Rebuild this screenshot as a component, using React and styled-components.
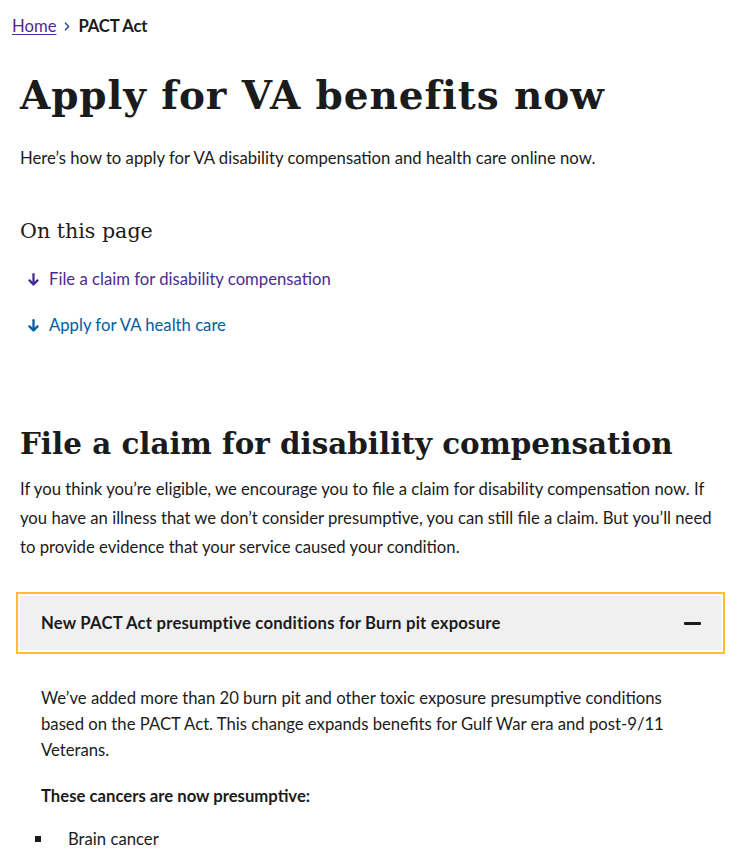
import React from "react";
import styled, { createGlobalStyle } from "styled-components";

const GlobalStyle = createGlobalStyle`
  body {
    margin: 0;
    background: #ffffff;
    color: #1b1b1b;
    font-family: "Lato", "Liberation Sans", sans-serif;
    font-size: 16.7px;
  }
  * { box-sizing: border-box; }
`;

const Page = styled.main`
  padding: 0 20px 40px 20px;
`;

const Breadcrumbs = styled.nav`
  display: flex;
  align-items: center;
  gap: 8px;
  margin: 14px 0 0 -8px;
  line-height: 24px;
`;

const CrumbLink = styled.a`
  color: #4c2c92;
  text-decoration: underline;
  text-underline-offset: 2px;
`;

const CrumbCurrent = styled.span`
  font-weight: 700;
  color: #1b1b1b;
  letter-spacing: -0.2px;
`;

const Title = styled.h1`
  font-family: "DejaVu Serif", "Liberation Serif", serif;
  font-weight: 700;
  font-size: 39px;
  letter-spacing: 0.9px;
  line-height: 48px;
  margin: 33px 0 0 0;
`;

const Intro = styled.p`
  margin: 26px 0 0 0;
  line-height: 27px;
`;

const OnPageTitle = styled.h2`
  font-family: "DejaVu Serif", "Liberation Serif", serif;
  font-weight: 400;
  font-size: 20.6px;
  line-height: 27px;
  margin: 46px 0 0 0;
`;

const JumpList = styled.ul`
  list-style: none;
  margin: 21px 0 0 0;
  padding: 0 0 0 8px;
  display: flex;
  flex-direction: column;
  gap: 18px;
`;

const JumpItem = styled.li`
  line-height: 27px;
`;

const JumpLink = styled.a`
  display: inline-flex;
  align-items: center;
  gap: 10px;
  color: ${(p) => (p.visited ? "#4c2c92" : "#005ea2")};
  text-decoration: none;
`;

const SectionTitle = styled.h2`
  font-family: "DejaVu Serif", "Liberation Serif", serif;
  font-weight: 700;
  font-size: 29.4px;
  line-height: 36px;
  margin: 86px 0 0 0;
`;

const Para = styled.p`
  margin: 13px 0 0 0;
  line-height: 29px;
`;

const Accordion = styled.section`
  margin-top: 34px;
`;

const AccordionButton = styled.button`
  width: 100%;
  display: flex;
  align-items: center;
  justify-content: space-between;
  padding: 15px 20px 15px 21px;
  border: none;
  background: #f0f0f0;
  font-family: inherit;
  font-size: 16.7px;
  font-weight: 700;
  letter-spacing: 0.2px;
  line-height: 24px;
  color: #1b1b1b;
  text-align: left;
  outline: 2px solid #ffbe2e;
  outline-offset: 2px;
  cursor: pointer;
`;

const Minus = styled.span`
  display: block;
  width: 17px;
  height: 3px;
  border-radius: 1px;
  background: #1b1b1b;
`;

const AccordionBody = styled.div`
  padding: 35px 20px 0 21px;
`;

const BodyText = styled.p`
  margin: ${(p) => p.mt || 0}px 0 0 0;
  line-height: 26px;
  font-weight: ${(p) => (p.bold ? 700 : 400)};
`;

const Bullets = styled.ul`
  list-style: none;
  margin: 17px 0 0 0;
  padding: 0;
`;

const Bullet = styled.li`
  display: flex;
  align-items: center;
  line-height: 26px;

  &::before {
    content: "";
    width: 6px;
    height: 6px;
    background: #1b1b1b;
    margin: 0 27px 0 -6px;
  }
`;

const DownArrow = () => (
  <svg width="11" height="13" viewBox="0 0 11 13" fill="none">
    <path d="M5.5 1.2v10" stroke="currentColor" strokeWidth="2.3" strokeLinecap="round" />
    <path d="M1.5 7.4l4 4 4-4" stroke="currentColor" strokeWidth="2.3" strokeLinecap="round" strokeLinejoin="round" />
  </svg>
);

const Chevron = () => (
  <svg width="6" height="9" viewBox="0 0 6 9" fill="none">
    <path d="M1.5 1.2L4.6 4.5 1.5 7.8" stroke="#2e55a4" strokeWidth="1.6" strokeLinecap="round" strokeLinejoin="round" />
  </svg>
);

export default function App() {
  return (
    <Page>
      <GlobalStyle />
      <Breadcrumbs>
        <CrumbLink href="#">Home</CrumbLink>
        <Chevron />
        <CrumbCurrent>PACT Act</CrumbCurrent>
      </Breadcrumbs>

      <Title>Apply for VA benefits now</Title>
      <Intro>Here’s how to apply for VA disability compensation and health care online now.</Intro>

      <OnPageTitle>On this page</OnPageTitle>
      <JumpList>
        <JumpItem>
          <JumpLink href="#file" visited>
            <DownArrow />
            File a claim for disability compensation
          </JumpLink>
        </JumpItem>
        <JumpItem>
          <JumpLink href="#health">
            <DownArrow />
            Apply for VA health care
          </JumpLink>
        </JumpItem>
      </JumpList>

      <SectionTitle id="file">File a claim for disability compensation</SectionTitle>
      <Para>
        If you think you’re eligible, we encourage you to file a claim for disability compensation now. If
        you have an illness that we don’t consider presumptive, you can still file a claim. But you’ll need
        to provide evidence that your service caused your condition.
      </Para>

      <Accordion>
        <AccordionButton>
          New PACT Act presumptive conditions for Burn pit exposure
          <Minus />
        </AccordionButton>
        <AccordionBody>
          <BodyText>
            We’ve added more than 20 burn pit and other toxic exposure presumptive conditions based on the
            PACT Act. This change expands benefits for Gulf War era and post-9/11 Veterans.
          </BodyText>
          <BodyText bold mt={20}>These cancers are now presumptive:</BodyText>
          <Bullets>
            <Bullet>Brain cancer</Bullet>
          </Bullets>
        </AccordionBody>
      </Accordion>
    </Page>
  );
}
